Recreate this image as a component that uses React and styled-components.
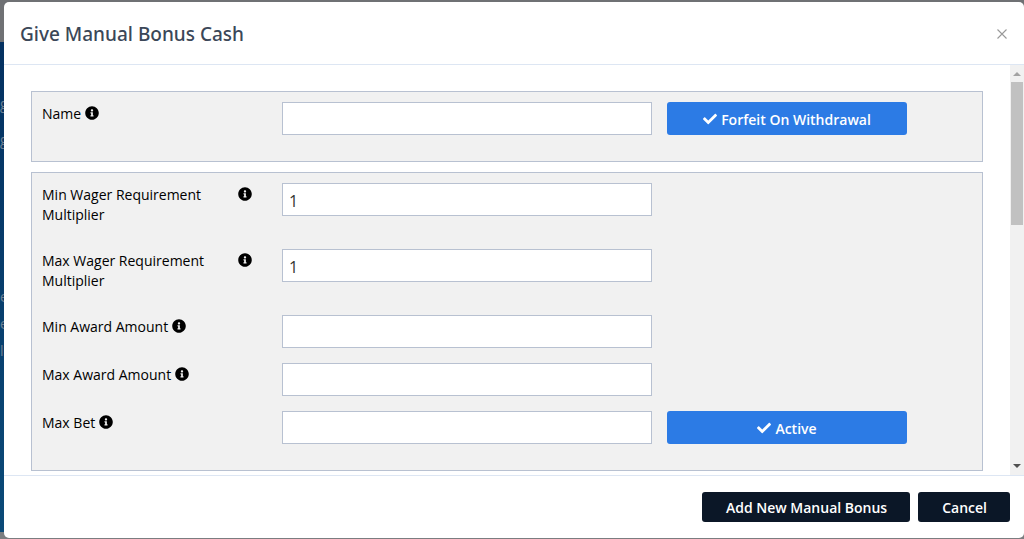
import React, { useState } from 'react';
import styled, { createGlobalStyle } from 'styled-components';
import { FaCheck, FaInfoCircle } from 'react-icons/fa';

const GlobalStyle = createGlobalStyle`
  * {
    box-sizing: border-box;
  }
  body {
    margin: 0;
    font-family: 'Open Sans', 'Noto Sans', sans-serif;
    color: #000;
  }
`;

const Page = styled.div`
  position: relative;
  display: flex;
  flex-direction: column;
  height: 100vh;
  overflow: hidden;
  background: #7b7d80;
`;

const PageHeader = styled.div`
  height: 42px;
  padding-left: 16px;
  background: #6f7174;
`;

const PageSidebar = styled.div`
  flex: 1;
  display: flex;
  flex-direction: column;
  margin-bottom: 7px;
  padding-top: 52px;
  background: linear-gradient(#043161, #0b4a78);
  font-size: 14px;
  line-height: 20px;
  color: #6d8093;
`;

const SidebarGroup = styled.div`
  display: flex;
  flex-direction: column;
  gap: ${(props) => props.$gap};
  margin-bottom: 137px;
`;

const Overlay = styled.div`
  position: absolute;
  inset: 0;
  display: flex;
  padding: 2px 0 1px 4px;
`;

const Modal = styled.div`
  flex: 1;
  display: flex;
  flex-direction: column;
  min-width: 0;
  background: #fff;
  border-radius: 5px;
  overflow: hidden;
`;

const ModalHeader = styled.header`
  display: flex;
  align-items: center;
  justify-content: space-between;
  padding: 18px 16px 16px;
  border-bottom: 1px solid #dde6f3;
`;

const Title = styled.h1`
  margin: 0;
  font-family: 'Noto Sans', sans-serif;
  font-size: 19px;
  font-weight: 500;
  line-height: 28px;
  color: #3b4758;
`;

const CloseButton = styled.button`
  display: flex;
  padding: 1px;
  border: none;
  background: none;
  cursor: pointer;
`;

const ModalMain = styled.div`
  flex: 1;
  display: flex;
  min-height: 0;
`;

const ModalBody = styled.div`
  flex: 1;
  display: flex;
  flex-direction: column;
  gap: 10px;
  padding: 26px 27px 0;
  overflow: hidden;
`;

const Panel = styled.section`
  display: flex;
  flex-direction: column;
  gap: 15px;
  padding: 10px 10px 26px;
  border: 1px solid #b8c1d1;
  background: #f1f1f1;
`;

const Row = styled.div`
  display: grid;
  grid-template-columns: 45fr 74fr 48fr 10fr;
  column-gap: 15px;
  align-items: start;
  min-height: ${(props) => (props.$tall ? '51px' : '33px')};
`;

const LabelCell = styled.div`
  display: flex;
  gap: 4px;
  padding: 2px 15px 0 0;
`;

const Label = styled.label`
  font-size: 14px;
  font-weight: 500;
  line-height: 20px;
`;

const InfoIcon = styled(FaInfoCircle)`
  flex: none;
  width: 14px;
  height: 14px;
  margin-top: 2px;
`;

const Input = styled.input`
  width: 100%;
  height: 33px;
  padding: 2px 6px 0;
  border: 1px solid #b8c1d1;
  border-radius: 0;
  background: #fff;
  font-family: inherit;
  font-size: 16px;
  color: #333;
`;

const ToggleButton = styled.button`
  display: flex;
  align-items: center;
  justify-content: center;
  gap: 4px;
  height: 33px;
  padding: 1px 6px 0;
  border: none;
  border-radius: 3px;
  background: #2c7be5;
  font-family: inherit;
  font-size: 14px;
  font-weight: 600;
  color: #fff;
  cursor: pointer;
`;

const Scrollbar = styled.div`
  display: flex;
  flex-direction: column;
  align-items: center;
  width: 14px;
  padding: 6px 0;
  background: #f1f1f1;
`;

const ScrollThumb = styled.div`
  flex: 0 0 36%;
  width: 12px;
  margin: 5px 0 auto;
  background: #c1c1c1;
`;

const ModalFooter = styled.footer`
  display: flex;
  justify-content: flex-end;
  gap: 8px;
  padding: 16px 14px;
  border-top: 1px solid #dde6f3;
`;

const FooterButton = styled.button`
  height: 30px;
  padding: 1px 23px 0 24px;
  border: none;
  border-radius: 3px;
  background: #0b1727;
  font-family: inherit;
  font-size: 14px;
  font-weight: 600;
  color: #fff;
  cursor: pointer;
`;

const wagerFields = [
  { id: 'minWager', label: 'Min Wager Requirement Multiplier', value: '1', tall: true },
  { id: 'maxWager', label: 'Max Wager Requirement Multiplier', value: '1', tall: true },
  { id: 'minAward', label: 'Min Award Amount' },
  { id: 'maxAward', label: 'Max Award Amount' },
  { id: 'maxBet', label: 'Max Bet', toggle: 'Active' },
];

function Toggle({ children }) {
  const [on, setOn] = useState(true);
  return (
    <ToggleButton type="button" aria-pressed={on} onClick={() => setOn(!on)}>
      {on && <FaCheck size={14} />}
      {children}
    </ToggleButton>
  );
}

function Field({ id, label, value, tall, toggle }) {
  return (
    <Row $tall={tall}>
      <LabelCell>
        <Label htmlFor={id}>{label}</Label>
        <InfoIcon />
      </LabelCell>
      <Input id={id} type="text" defaultValue={value} />
      {toggle && <Toggle>{toggle}</Toggle>}
    </Row>
  );
}

function App() {
  return (
    <>
      <GlobalStyle />
      <Page>
        <PageHeader>
          <svg width="66" height="4" viewBox="0 0 66 4" stroke="#2d6ca3" strokeWidth="3">
            <path d="M2 0v2M9 0l2 2M15 1h7M26 1h6M36 0v2M43 1h4M52 0l2 2M59 1h6" />
          </svg>
        </PageHeader>
        <PageSidebar aria-hidden="true">
          <SidebarGroup $gap="16px">
            <span>g</span>
            <span>g</span>
          </SidebarGroup>
          <SidebarGroup $gap="7px">
            <span>e</span>
            <span>e</span>
            <span>l</span>
          </SidebarGroup>
        </PageSidebar>
        <Overlay>
          <Modal role="dialog" aria-labelledby="title">
            <ModalHeader>
              <Title id="title">Give Manual Bonus Cash</Title>
              <CloseButton type="button" aria-label="Close">
                <svg width="10" height="10" viewBox="0 0 10 10" stroke="#999" strokeWidth="1.1">
                  <path d="M0.5 0.5l9 9M9.5 0.5l-9 9" />
                </svg>
              </CloseButton>
            </ModalHeader>
            <ModalMain>
              <ModalBody>
                <Panel>
                  <Field id="name" label="Name" toggle="Forfeit On Withdrawal" />
                </Panel>
                <Panel>
                  {wagerFields.map((field) => (
                    <Field key={field.id} {...field} />
                  ))}
                </Panel>
              </ModalBody>
              <Scrollbar>
                <svg width="8" height="6" viewBox="0 0 8 6" fill="#a3a3a3">
                  <path d="M0 5l4-4 4 4z" />
                </svg>
                <ScrollThumb />
                <svg width="8" height="6" viewBox="0 0 8 6" fill="#505050">
                  <path d="M0 1l4 4 4-4z" />
                </svg>
              </Scrollbar>
            </ModalMain>
            <ModalFooter>
              <FooterButton type="button">Add New Manual Bonus</FooterButton>
              <FooterButton type="button">Cancel</FooterButton>
            </ModalFooter>
          </Modal>
        </Overlay>
      </Page>
    </>
  );
}

export default App;
